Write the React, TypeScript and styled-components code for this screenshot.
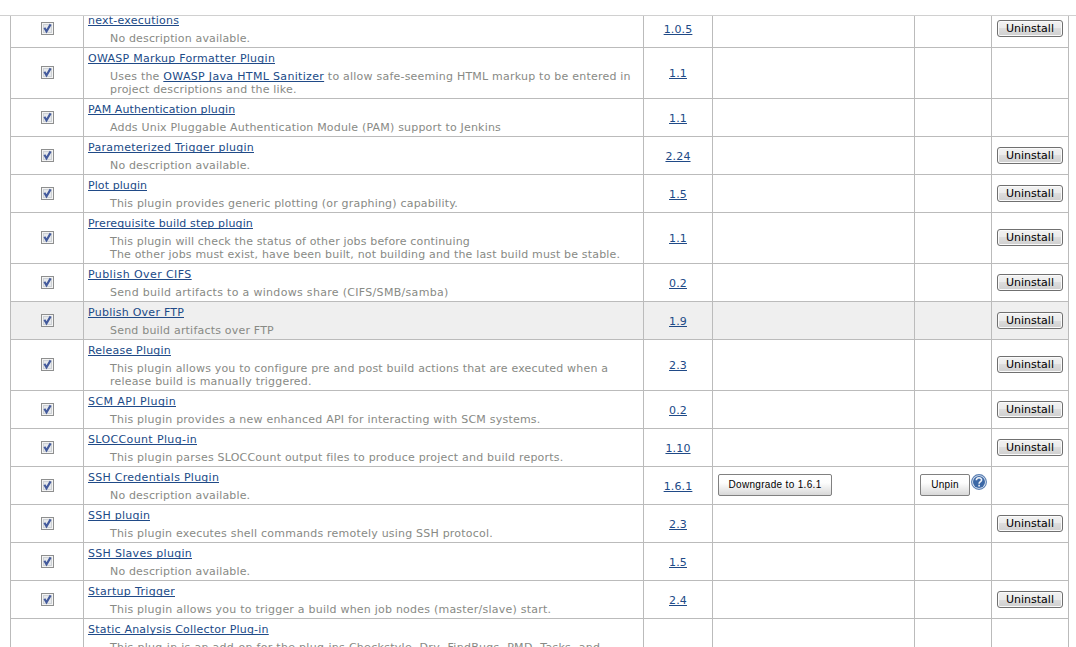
import React from "react";
import styled, { createGlobalStyle } from "styled-components";

const GlobalStyle = createGlobalStyle`
  * { box-sizing: border-box; }
  body {
    margin: 0;
    background: #fff;
    font: 11px/13px "DejaVu Sans", Verdana, sans-serif;
    color: #000;
  }
`;

const Page = styled.div`
  height: 647px;
  padding-top: 15px;
  overflow: hidden;
`;

const Viewport = styled.div`
  height: 632px;
  border-top: 1px solid #d0d0d0;
  overflow: hidden;
`;

const Table = styled.div`
  width: 1059px;
  margin: -6px 0 0 10px;
  border-left: 1px solid #bbb;
`;

const Row = styled.div<{ $active?: boolean }>`
  display: grid;
  grid-template-columns: 73px 560px 69px 202px 77px 77px;
  border-bottom: 1px solid #bbb;
  background: ${(p) => (p.$active ? "#efefef" : "transparent")};
`;

const Cell = styled.div`
  display: flex;
  align-items: center;
  justify-content: center;
  padding-bottom: 1px;
  border-right: 1px solid #bbb;
`;

const VersionCell = styled(Cell)`
  padding: 1px 0 0;
`;

const ActionCell = styled(Cell)`
  justify-content: flex-start;
  padding-left: 5px;
`;

const InfoCell = styled.div`
  padding: 4px 4px 2px;
  border-right: 1px solid #bbb;
  white-space: nowrap;
`;

const Link = styled.a<{ $track?: number }>`
  color: #204a87;
  text-decoration: underline;
  text-decoration-thickness: 1px;
  text-underline-offset: 1px;
  text-decoration-skip-ink: none;
  letter-spacing: ${(p) => p.$track ?? 0}px;
`;

const Name = styled(Link)`
  display: block;
  width: max-content;
  height: 12px;
  margin-bottom: 6px;
  overflow: hidden;
`;

const Line = styled.div<{ $track?: number }>`
  padding-left: 22px;
  color: #888a85;
  letter-spacing: ${(p) => p.$track ?? 0}px;
`;

const NativeButton = styled.button`
  width: 66px;
  height: 17px;
  padding: 1px 0 0;
  border: 1px solid #707070;
  border-radius: 3px;
  box-shadow: inset 0 0 0 1px #fafafa;
  background: linear-gradient(#f2f2f2 0%, #ebebeb 50%, #dddddd 50%, #cfcfcf 100%);
  font: 11px/14px "DejaVu Sans", Verdana, sans-serif;
  color: #000;
`;

const PushButton = styled.button<{ $width: number }>`
  width: ${(p) => p.$width}px;
  height: 22px;
  padding: 0;
  border: 1px solid #808080;
  border-radius: 2px;
  background: linear-gradient(#fff 0%, #fdfdfd 40%, #d8d8d8 100%);
  font: 10px/20px "Liberation Sans", Arial, sans-serif;
  letter-spacing: 0.32px;
  color: #000;
`;

const HelpMark = styled.svg`
  display: block;
  margin: -6px 0 0 1px;
`;

function Check() {
  return (
    <svg width="13" height="13" viewBox="0 0 13 13" role="img" aria-label="Enabled">
      <rect x="0.5" y="0.5" width="12" height="12" fill="#f4f4f4" stroke="#8e8f8f" />
      <rect x="2.5" y="2.5" width="8" height="8" fill="#e6e8eb" stroke="#cdd1d5" />
      <path d="M3.4 5.8 L5.5 9.4 L9.6 2.4" fill="none" stroke="#435a9c" strokeWidth="2.1" />
    </svg>
  );
}

function Help() {
  return (
    <HelpMark width="16" height="16" viewBox="0 0 16 16" role="img" aria-label="Help">
      <circle cx="8" cy="8" r="7.4" fill="#e6ecf4" stroke="#5a7fb3" strokeWidth="1.1" />
      <circle cx="8" cy="8" r="6" fill="#3c68a6" />
      <path
        d="M5.3 6.3 C5.3 2.9 10.8 2.9 10.6 6 C10.5 7.7 8.1 7.6 8.1 9.8 M8.1 10.8 V12.6"
        fill="none"
        stroke="#eef2f8"
        strokeWidth="1.6"
      />
    </HelpMark>
  );
}

interface Plugin {
  name: string;
  track: number;
  lines: { text: React.ReactNode; track: number }[];
  version?: string;
  checked?: boolean;
  removable?: boolean;
  pinned?: boolean;
  active?: boolean;
}

const none = [{ text: "No description available.", track: 0.16 }];

const plugins: Plugin[] = [
  { name: "next-executions", track: 0.23, lines: none, version: "1.0.5", removable: true },
  {
    name: "OWASP Markup Formatter Plugin",
    track: 0.27,
    lines: [
      {
        text: (
          <>
            Uses the <Link $track={0.33}>OWASP Java HTML Sanitizer</Link> to allow safe-seeming HTML markup to be
            entered in
          </>
        ),
        track: 0.22,
      },
      { text: "project descriptions and the like.", track: 0.19 },
    ],
    version: "1.1",
  },
  {
    name: "PAM Authentication plugin",
    track: 0.1,
    lines: [{ text: "Adds Unix Pluggable Authentication Module (PAM) support to Jenkins", track: 0.19 }],
    version: "1.1",
  },
  { name: "Parameterized Trigger plugin", track: 0.26, lines: none, version: "2.24", removable: true },
  {
    name: "Plot plugin",
    track: 0.08,
    lines: [{ text: "This plugin provides generic plotting (or graphing) capability.", track: 0.19 }],
    version: "1.5",
    removable: true,
  },
  {
    name: "Prerequisite build step plugin",
    track: 0.14,
    lines: [
      { text: "This plugin will check the status of other jobs before continuing", track: 0.16 },
      {
        text: "The other jobs must exist, have been built, not building and the last build must be stable.",
        track: 0.175,
      },
    ],
    version: "1.1",
    removable: true,
  },
  {
    name: "Publish Over CIFS",
    track: 0.41,
    lines: [{ text: "Send build artifacts to a windows share (CIFS/SMB/samba)", track: 0.31 }],
    version: "0.2",
    removable: true,
  },
  {
    name: "Publish Over FTP",
    track: 0.25,
    lines: [{ text: "Send build artifacts over FTP", track: 0.2 }],
    version: "1.9",
    removable: true,
    active: true,
  },
  {
    name: "Release Plugin",
    track: 0.2,
    lines: [
      { text: "This plugin allows you to configure pre and post build actions that are executed when a", track: 0.18 },
      { text: "release build is manually triggered.", track: 0.19 },
    ],
    version: "2.3",
    removable: true,
  },
  {
    name: "SCM API Plugin",
    track: 0.43,
    lines: [{ text: "This plugin provides a new enhanced API for interacting with SCM systems.", track: 0.22 }],
    version: "0.2",
    removable: true,
  },
  {
    name: "SLOCCount Plug-in",
    track: 0.37,
    lines: [{ text: "This plugin parses SLOCCount output files to produce project and build reports.", track: 0.215 }],
    version: "1.10",
    removable: true,
  },
  { name: "SSH Credentials Plugin", track: 0.27, lines: none, version: "1.6.1", pinned: true },
  {
    name: "SSH plugin",
    track: 0.25,
    lines: [{ text: "This plugin executes shell commands remotely using SSH protocol.", track: 0.21 }],
    version: "2.3",
    removable: true,
  },
  { name: "SSH Slaves plugin", track: 0.3, lines: none, version: "1.5" },
  {
    name: "Startup Trigger",
    track: 0.33,
    lines: [{ text: "This plugin allows you to trigger a build when job nodes (master/slave) start.", track: 0.225 }],
    version: "2.4",
    removable: true,
  },
  {
    name: "Static Analysis Collector Plug-in",
    track: 0.21,
    lines: [
      { text: "This plug-in is an add-on for the plug-ins Checkstyle, Dry, FindBugs, PMD, Tasks, and", track: 0.29 },
    ],
    checked: false,
  },
];

export default function App() {
  return (
    <Page>
      <GlobalStyle />
      <Viewport>
        <Table>
          {plugins.map((p) => (
            <Row key={p.name} $active={p.active}>
              <Cell>{p.checked !== false && <Check />}</Cell>
              <InfoCell>
                <Name $track={p.track}>{p.name}</Name>
                {p.lines.map((line, i) => (
                  <Line key={i} $track={line.track}>
                    {line.text}
                  </Line>
                ))}
              </InfoCell>
              <VersionCell>{p.version && <Link $track={0.15}>{p.version}</Link>}</VersionCell>
              <ActionCell>{p.pinned && <PushButton $width={114}>Downgrade to {p.version}</PushButton>}</ActionCell>
              <ActionCell>
                {p.pinned && (
                  <>
                    <PushButton $width={50}>Unpin</PushButton>
                    <Help />
                  </>
                )}
              </ActionCell>
              <ActionCell>{p.removable && <NativeButton>Uninstall</NativeButton>}</ActionCell>
            </Row>
          ))}
        </Table>
      </Viewport>
    </Page>
  );
}
